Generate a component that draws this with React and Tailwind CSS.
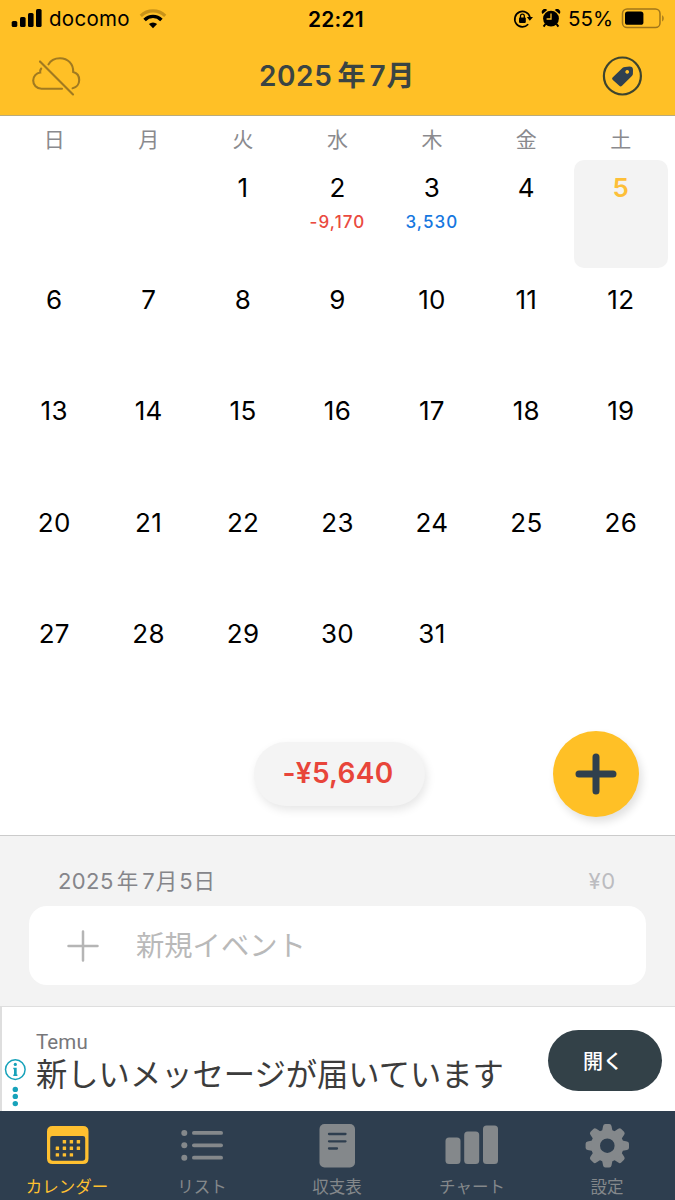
import React from "react";

const weekdays = ["日", "月", "火", "水", "木", "金", "土"];
const amounts = {
  2: { text: "-9,170", tone: "text-[#ea4a40]" },
  3: { text: "3,530", tone: "text-[#1577df]" },
};
const cells = Array.from({ length: 35 }, (_, i) => {
  const day = i - 1;
  return day >= 1 && day <= 31 ? day : null;
});

function StatusBar() {
  return (
    <div className="flex h-[37px] items-center text-[20px] leading-none text-black">
      <svg className="ml-[11px] h-[20px] w-[31px] shrink-0" viewBox="0 0 31 20">
        <rect x="0.7" y="12" width="5.6" height="6" rx="1.6" />
        <rect x="9" y="8" width="5.6" height="10" rx="1.6" />
        <rect x="17" y="4" width="5.6" height="14" rx="1.6" />
        <rect x="25" y="0" width="5.6" height="18" rx="1.6" />
      </svg>
      <span className="ml-[7px] w-[82px] pt-[2px] text-[20.5px] tracking-[0.3px]">docomo</span>
      <svg className="ml-[8px] h-[20px] w-[28px] shrink-0" viewBox="0 0 28 20" fill="none">
        <path d="M1.8 6.8 A17.5 17.5 0 0 1 26.2 6.8" stroke="#c99318" strokeWidth="3.2" />
        <path d="M5.600 11 A11.6 11.6 0 0 1 22.400 11" stroke="#000" strokeWidth="3.400" />
        <path d="M14 19.2 L9.9 15.1 A6.2 6.2 0 0 1 18.1 15.1 Z" fill="#000" />
      </svg>
      <span className="ml-[141px] w-[60px] pt-[2px] whitespace-nowrap text-[21px] font-semibold tracking-[0.2px]">22:21</span>
      <svg className="ml-[145px] h-[20px] w-[20px] shrink-0" viewBox="0 0 20 20" fill="none">
        <path d="M15.2 15.3 A7.7 7.7 0 1 1 17 8.4" stroke="#000" strokeWidth="1.7" />
        <path d="M13.800 8 H20 L16.800 11.800 Z" fill="#000" />
        <rect x="6" y="8.600" width="6.800" height="5.3" rx="0.8" fill="#000" />
        <path d="M7.5 9 V7 a1.900 1.900 0 0 1 3.800 0 V9" stroke="#000" strokeWidth="1.3" />
      </svg>
      <svg className="ml-[8px] h-[20px] w-[20px] shrink-0" viewBox="0 0 20 20">
        <circle cx="10" cy="9.600" r="7.900" />
        <path d="M4.500 15 L2.600 17.600 M15.500 15 L17.400 17.600" stroke="#000" strokeWidth="2" />
        <path d="M1.6 5 a3 3 0 0 1 4.6 -4 Z M18.4 5 a3 3 0 0 0 -4.6 -4 Z" />
        <path d="M10 4.400 V10 H5.6" fill="none" stroke="#ffc026" strokeWidth="1.300" />
      </svg>
      <span className="ml-[7px] w-[46px] pt-[1px] text-[20.5px]">55%</span>
      <svg className="ml-[7px] h-[22px] w-[44px] shrink-0" viewBox="0 0 44 22">
        <rect x="1.500" y="0.900" width="37.500" height="18.600" rx="4.6" fill="none" stroke="#a1761a" strokeWidth="1.500" />
        <rect x="4" y="3.600" width="18.400" height="13.200" rx="2.600" />
        <path d="M41.2 7.300 c2 1 2 5.200 0 6.200 Z" fill="#a1761a" />
      </svg>
    </div>
  );
}

function Header() {
  return (
    <header className="h-[116px] shrink-0 border-b border-[#b9ab7c] bg-[#ffc026]">
      <StatusBar />
      <div className="flex h-[78px] items-center">
        <svg
          className="ml-[32px] h-[40px] w-[50px] shrink-0"
          viewBox="0 0 50 40"
          fill="none"
          stroke="#a17a20"
          strokeWidth="2.100"
          strokeLinecap="round"
        >
          <path d="M30 32.800 H9.500 C4.500 32.800 1.200 29 1.200 24.500 C1.200 20.300 4.300 17 8.200 16.500 C7.900 14.600 8.300 13.600 9.200 12.500" />
          <path d="M16.500 8.400 C18.500 4.400 23 2.200 28 2.200 C36 2.200 41.500 8 41.200 16 C44.800 16.900 47.200 20.200 47.200 24 C47.200 28 44.500 31.500 40.600 32.200" />
          <path d="M8 5.400 L41 38.400" />
        </svg>
        <h1 className="ml-[177px] w-[160px] whitespace-nowrap text-[28px] leading-none font-semibold text-[#3a4443]">
          <span className="tracking-[0.6px]">2025</span>
          <span className="ml-[5px] text-[28px]">年</span>
          <span className="ml-[4px]">7</span>
          <span className="ml-[1px] text-[28px]">月</span>
        </h1>
        <svg className="ml-[183px] h-[40px] w-[40px] shrink-0" viewBox="0 0 40 40">
          <circle cx="20.400" cy="20" r="18.500" fill="none" stroke="#3e442e" strokeWidth="2.200" />
          <path
            fillRule="evenodd"
            fill="#2f4050"
            d="M10.600 21.600 L20.700 11.800 Q21.600 11 23 10.900 L27.500 10.600 Q31 10.600 31 14 L30.900 18 Q30.800 19.200 29.900 20.100 L20 29.800 Q18.600 31 17.300 29.800 L10.600 23.800 Q9.500 22.700 10.600 21.600 Z M25.200 14 a1.900 1.900 0 1 0 0.010 0 Z"
          />
        </svg>
      </div>
    </header>
  );
}

function Calendar() {
  return (
    <main className="flex h-[719px] shrink-0 flex-col bg-white">
      <div className="grid h-[44px] grid-cols-7 px-[7px] text-center text-[21px] leading-[47px] text-[#8a8a8e]">
        {weekdays.map((d) => (
          <span key={d}>{d}</span>
        ))}
      </div>
      <div className="grid h-[558px] grid-cols-7 grid-rows-5 px-[7px]">
        {cells.map((day, i) => (
          <div
            key={i}
            className={
              day === 5
                ? "mx-[0.5px] h-[108px] rounded-[10px] bg-[#f3f3f3] text-center font-semibold text-[#fdbf38]"
                : "h-[108px] text-center text-black"
            }
          >
            <div className="pt-[12px] text-[26px] leading-[32px] tracking-[0.3px]">{day}</div>
            {amounts[day] && (
              <div className={`mt-[8px] text-[17px] leading-[20px] font-medium tracking-[1.1px] ${amounts[day].tone}`}>
                {amounts[day].text}
              </div>
            )}
          </div>
        ))}
      </div>
      <div className="flex h-[112px] items-center">
        <div className="ml-[254px] flex h-[64px] w-[171px] items-center justify-center rounded-full bg-[#f4f4f4] pr-[3px] pb-[2px] text-[28px] font-semibold tracking-[0.3px] text-[#e8453a] shadow-[2px_4px_10px_rgba(0,0,0,0.10)]">
          -¥5,640
        </div>
        <button className="ml-[128px] flex h-[86px] w-[86px] items-center justify-center rounded-full bg-[#ffc026] shadow-[3px_5px_9px_rgba(0,0,0,0.12)]">
          <svg className="h-[42px] w-[42px]" viewBox="0 0 42 42" stroke="#30404d" strokeWidth="7" strokeLinecap="round">
            <path d="M21 4 V38 M4 21 H38" />
          </svg>
        </button>
      </div>
    </main>
  );
}

function Events() {
  return (
    <section className="h-[171px] shrink-0 border-t border-[#cbcbcb] bg-[#f3f3f3] pt-[28px]">
      <div className="flex h-[34px] items-center justify-between pr-[59px] pl-[58px] text-[22px] leading-none">
        <div className="whitespace-nowrap text-[#85858a]">
          <span className="tracking-[0.4px]">2025</span>
          <span className="ml-[3px] text-[21.500px]">年</span>
          <span className="ml-[4px]">7</span>
          <span className="ml-[1px] text-[21.500px]">月</span>
          <span className="ml-[2px]">5</span>
          <span className="ml-[1px] text-[21.500px]">日</span>
        </div>
        <span className="tracking-[0.800px] text-[#bcbcc0]">¥0</span>
      </div>
      <div className="mt-[8px] ml-[29px] flex h-[79px] w-[617px] items-center rounded-[18px] bg-white">
        <svg className="ml-[38px] h-[32px] w-[32px]" viewBox="0 0 32 32" stroke="#b5b5b5" strokeWidth="2.500" strokeLinecap="round">
          <path d="M16 1.500 V30.500 M1.500 16 H30.500" />
        </svg>
        <span className="ml-[37px] pt-[2px] text-[28.300px] leading-none text-[#b9b9b9]">新規イベント</span>
      </div>
    </section>
  );
}

function Ad() {
  return (
    <aside className="flex h-[105px] shrink-0 border-t border-l-2 border-[#dedede] bg-white">
      <svg className="mt-[51px] ml-[2px] h-[52px] w-[23px] shrink-0" viewBox="0 0 23 52" fill="#17a2ba">
        <circle cx="11.300" cy="11.600" r="9.800" fill="none" stroke="#17a2ba" strokeWidth="1.500" />
        <circle cx="11.300" cy="6.400" r="1.600" />
        <path d="M9.300 9.800 H12.700 V16.500 H13.400 V18 H9.300 V16.500 H10 V11.200 H9.300 Z" />
        <circle cx="11.300" cy="31.400" r="2.700" />
        <circle cx="11.300" cy="38.400" r="2.700" />
        <circle cx="11.300" cy="45.600" r="2.700" />
      </svg>
      <div className="ml-[9px] w-[512px] pt-[23px] whitespace-nowrap">
        <div className="font-['Roboto','Inter',sans-serif] text-[20.500px] leading-[24px] tracking-[0.100px] text-[#77777a]">Temu</div>
        <div className="text-[31.300px] leading-[42px] font-normal text-[#3c3c3c]">新しいメッセージが届いています</div>
      </div>
      <button className="mt-[23px] flex h-[61px] w-[114px] shrink-0 items-center justify-center rounded-full bg-[#334148] pt-[2px] pr-[4px] text-[20px] font-medium text-white">
        開く
      </button>
    </aside>
  );
}

const calendarDots = [
  [17, 0], [24, 0], [31, 0],
  [10, 1], [17, 1], [24, 1], [31, 1],
  [10, 2], [17, 2], [24, 2],
];
const gearTeeth = [0, 45, 90, 135, 180, 225, 270, 315];

const tabs = [
  {
    label: "カレンダー",
    icon: (
      <>
        <path
          fillRule="evenodd"
          d="M12.500 5 H43 Q48.500 5 48.500 10.500 V37.500 Q48.500 43 43 43 H12.500 Q7 43 7 37.500 V10.500 Q7 5 12.500 5 Z M12.500 15 Q10.200 15 10.200 17.300 V37 Q10.200 39.800 13 39.800 H42.300 Q45.200 39.800 45.200 37 V17.300 Q45.200 15 42.900 15 Z"
        />
        {calendarDots.map(([x, row]) => (
          <rect key={`${x}-${row}`} x={x + 5.7} y={row * 6.6 + 19} width="3.400" height="3.400" rx="0.500" />
        ))}
      </>
    ),
  },
  {
    label: "リスト",
    icon: (
      <>
        {[11.9, 24.3, 36.7].map((y) => (
          <g key={y}>
            <circle cx="9.300" cy={y} r="3" />
            <rect x="17" y={y - 1.9} width="31" height="3.800" rx="1.900" />
          </g>
        ))}
      </>
    ),
  },
  {
    label: "収支表",
    icon: (
      <>
        <rect x="9.500" y="3" width="35.500" height="43.500" rx="5" />
        <path d="M19 13 H35.500 M19 20.300 H35.500 M19 27.500 H27" stroke="#2e3e4f" strokeWidth="2.300" strokeLinecap="round" />
      </>
    ),
  },
  {
    label: "チャート",
    icon: (
      <>
        <rect x="0.500" y="16.500" width="15" height="26.500" rx="3.500" />
        <rect x="19.200" y="10.500" width="15" height="32.500" rx="3.500" />
        <rect x="38" y="4.500" width="15" height="38.500" rx="3.500" />
      </>
    ),
  },
  {
    label: "設定",
    icon: (
      <>
        {gearTeeth.map((a) => (
          <path key={a} d="M21.700 12 L23.100 5 Q23.500 3 25.300 3 H29.300 Q31.100 3 31.500 5 L32.900 12 Z" transform={`rotate(${a} 27.300 24.700)`} />
        ))}
        <circle cx="27.300" cy="24.700" r="11.800" fill="none" stroke="currentColor" strokeWidth="9" />
      </>
    ),
  },
];

function TabBar() {
  return (
    <nav className="grid h-[89px] shrink-0 grid-cols-5 bg-[#2e3e4f]">
      {tabs.map((t, i) => (
        <div
          key={t.label}
          className={i === 0 ? "flex flex-col items-center pt-[10px] text-[#ffc030]" : "flex flex-col items-center pt-[10px] text-[#84888b]"}
        >
          <svg className="h-[48px] w-[56px]" viewBox="0 0 56 48" fill="currentColor">
            {t.icon}
          </svg>
          <span className="mt-[6px] mr-[1px] text-[16.500px] leading-[24px] whitespace-nowrap">{t.label}</span>
        </div>
      ))}
    </nav>
  );
}

export default function App() {
  return (
    <div className="flex h-[1200px] w-[675px] flex-col overflow-hidden bg-white font-['Inter','Noto_Sans_CJK_JP',sans-serif]">
      <Header />
      <Calendar />
      <Events />
      <Ad />
      <TabBar />
    </div>
  );
}
